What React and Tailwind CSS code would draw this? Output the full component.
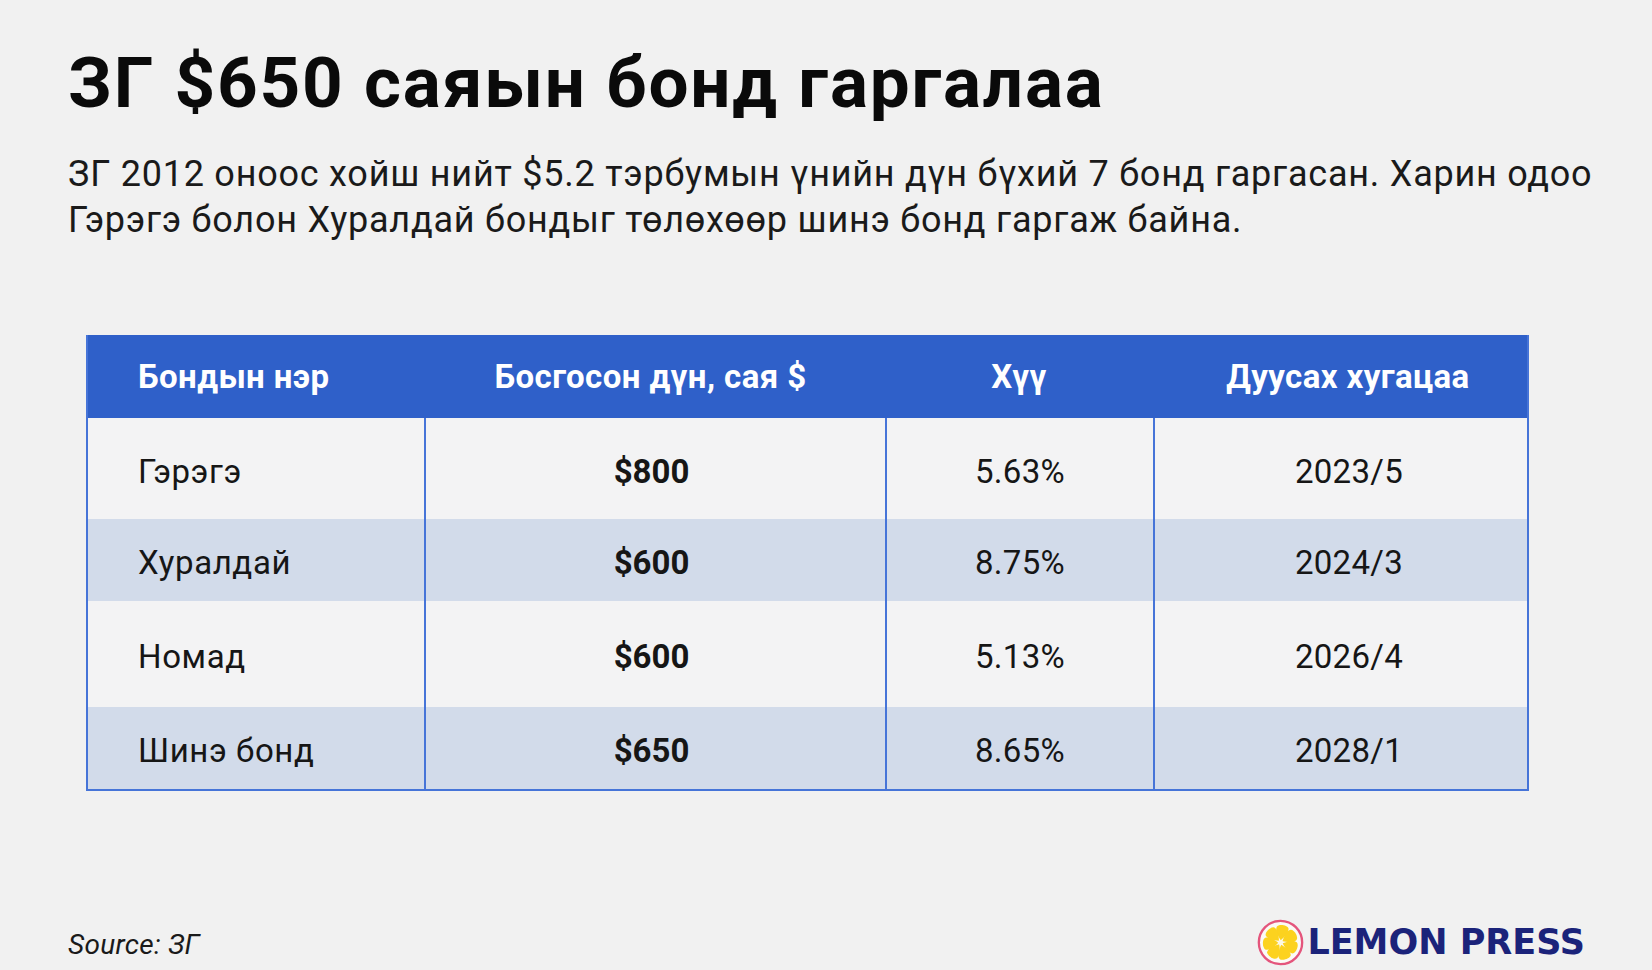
import React from "react";

const rows = [
  { name: "Гэрэгэ", amount: "$800", rate: "5.63%", date: "2023/5", h: "h-[101px]", stripe: false },
  { name: "Хуралдай", amount: "$600", rate: "8.75%", date: "2024/3", h: "h-[82px]", stripe: true },
  { name: "Номад", amount: "$600", rate: "5.13%", date: "2026/4", h: "h-[106px]", stripe: false },
  { name: "Шинэ бонд", amount: "$650", rate: "8.65%", date: "2028/1", h: "h-[82px]", stripe: true },
];

function LemonLogo() {
  const n = 7;
  const petals = [];
  for (let i = 0; i < n; i++) {
    petals.push((i * 360) / n + 8);
  }
  return (
    <svg width="47" height="47" viewBox="0 0 46 46" className="block">
      <circle cx="23" cy="23" r="21.2" fill="#fbfaf6" stroke="#e4557c" strokeWidth="2.3" />
      {petals.map((t, i) => (
        <g key={i} transform={`rotate(${t} 23 23)`}>
          <path
            d="M23 20.8 C19.6 17 16 12 17.2 8.2 C18.4 4.9 27.6 4.9 28.8 8.2 C30 12 26.4 17 23 20.8 Z"
            fill="#fcd21f"
          />
        </g>
      ))}
      <circle cx="23" cy="23" r="2.2" fill="#fdf8e2" />
    </svg>
  );
}

export default function App() {
  return (
    <div className="w-[1652px] h-[970px] bg-[#f1f1f1] overflow-hidden font-['Roboto',sans-serif] text-[#141414]">
      <div className="pl-[68px] pt-[47px]">
        <h1 className="text-[71px] leading-none font-bold text-[#0a0a0a] tracking-[1.8px]">
          ЗГ $650 саяын бонд гаргалаа
        </h1>
        <p className="mt-[33px] text-[36px] leading-[46px] text-[#1a1a1a] tracking-[0.77px] w-[1570px]">
          ЗГ 2012 оноос хойш нийт $5.2 тэрбумын үнийн дүн бүхий 7 бонд гаргасан. Харин одоо
          <br />
          Гэрэгэ болон Хуралдай бондыг төлөхөөр шинэ бонд гаргаж байна.
        </p>
      </div>

      <div className="ml-[86px] mt-[92px] w-[1443px] border-x-2 border-b-2 border-[#4674d8]">
        <div className="grid grid-cols-[336px_461px_268px_374px] h-[83px] bg-[#2f60c9] text-white font-bold text-[33px] tracking-[0.4px] items-center">
          <div className="pl-[50px]">Бондын нэр</div>
          <div className="text-center pr-[8px]">Босгосон дүн, сая $</div>
          <div className="text-center">Хүү</div>
          <div className="text-center pl-[16px]">Дуусах хугацаа</div>
        </div>
        {rows.map((r) => (
          <div
            key={r.name}
            className={`grid grid-cols-[336px_461px_268px_374px] ${r.h} ${r.stripe ? "bg-[#d2dbea]" : "bg-[#f3f3f4]"} text-[33px] text-[#161616]`}
          >
            <div className="flex items-center pl-[50px] pt-[6px] tracking-[0.6px]">{r.name}</div>
            <div className="flex items-center justify-center pt-[6px] border-l-2 border-[#4674d8] font-bold pr-[8px]">{r.amount}</div>
            <div className="flex items-center justify-center pt-[6px] border-l-2 border-[#4674d8] tracking-[0.3px]">{r.rate}</div>
            <div className="flex items-center justify-center pt-[6px] border-l-2 border-[#4674d8] pl-[16px] tracking-[0.3px]">{r.date}</div>
          </div>
        ))}
      </div>

      <div className="mt-[127px] flex items-center justify-between pl-[68px] pr-[67px] h-[48px]">
        <div className="italic text-[28px] text-[#1a1a1a] tracking-[0.3px] pt-[6px]">Source: ЗГ</div>
        <div className="flex items-center gap-[3px]">
          <LemonLogo />
          <span className="font-['DejaVu_Sans',sans-serif] font-bold text-[35px] leading-none text-[#1b237a]">
            LEMON PRESS
          </span>
        </div>
      </div>
    </div>
  );
}
